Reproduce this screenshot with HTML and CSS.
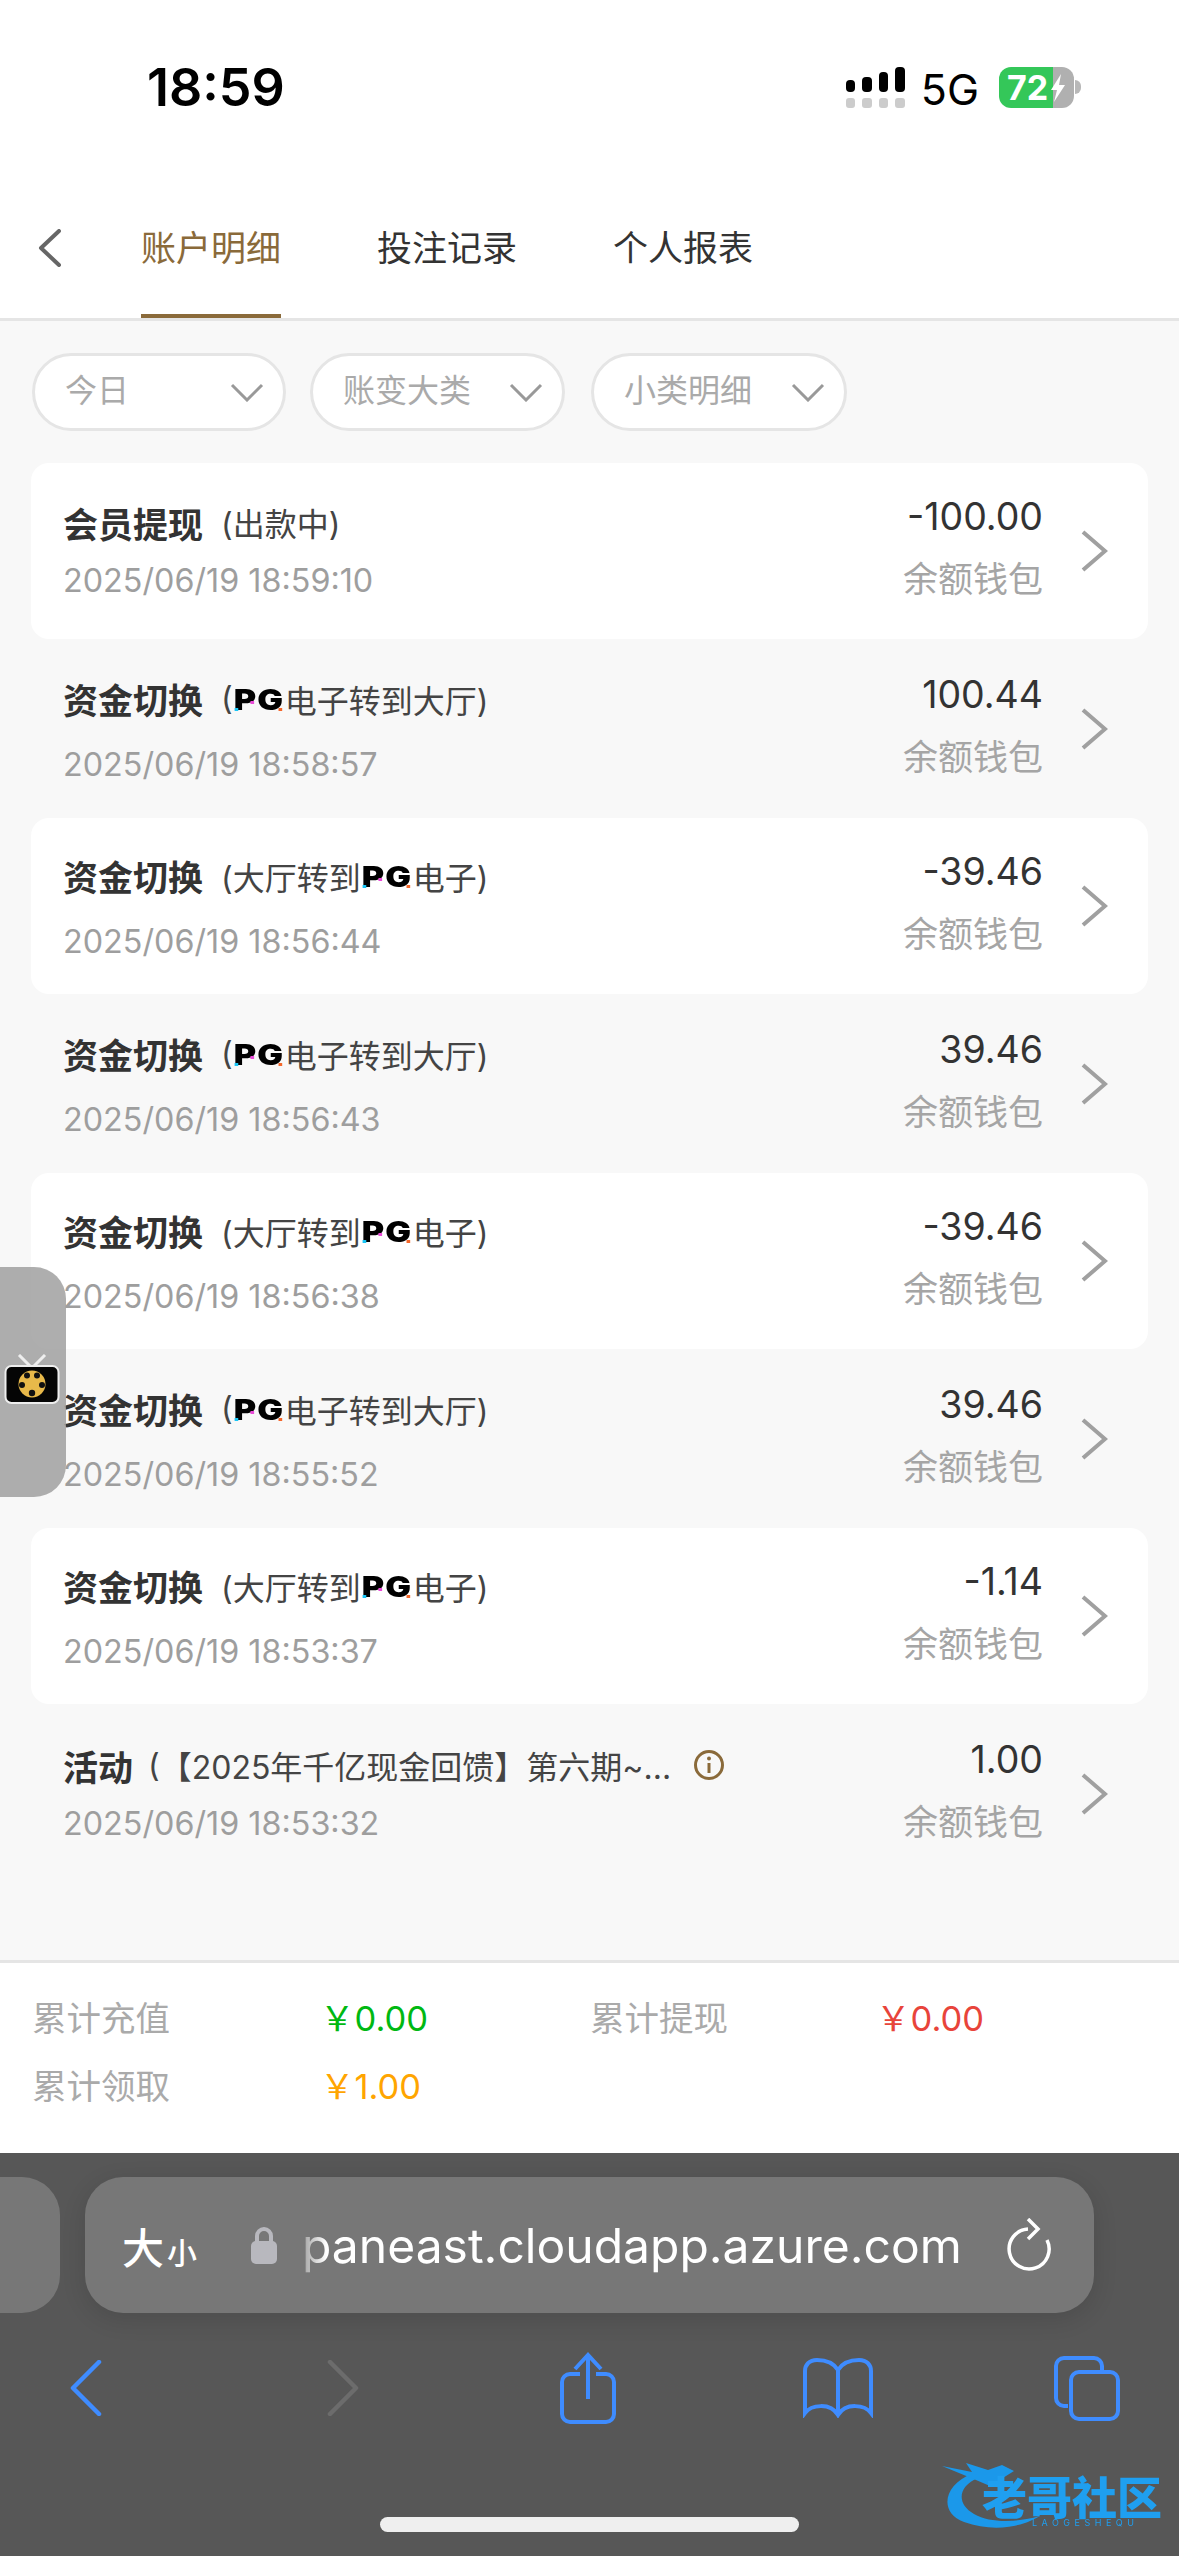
FILE: index.html
```html
<!DOCTYPE html>
<html lang="zh-CN">
<head>
  <meta charset="UTF-8">
  <meta name="viewport" content="width=device-width, initial-scale=1.0">
  <title>账户明细</title>
  <link rel="stylesheet" href="styles.css">
</head>
<body>
  <div class="page">

    <div class="status-bar">
      <span class="time">18:59</span>
      <div class="status-right">
        <div class="signal">
          <div class="bars"><i class="b1"></i><i class="b2"></i><i class="b3"></i><i class="b4"></i></div>
          <div class="bars-off"><i></i><i></i><i></i><i></i></div>
        </div>
        <span class="net">5G</span>
        <div class="battery">
          <span class="battery-num">72</span>
          <svg class="bolt" viewBox="0 0 16 28"><path d="M11 0 L1 16 H7 L4 28 L15 11 H9 Z" fill="#fff"/></svg>
        </div>
        <div class="battery-nub"></div>
      </div>
    </div>

    <div class="tabs">
      <div class="back">
        <svg width="23" height="38" viewBox="0 0 23 38"><path d="M21 2 L3 19 L21 36" fill="none" stroke="#666" stroke-width="4" stroke-linecap="round" stroke-linejoin="round"/></svg>
      </div>
      <div class="tab active">账户明细</div>
      <div class="tab">投注记录</div>
      <div class="tab">个人报表</div>
    </div>

    <div class="filters">
      <div class="pill"><span>今日</span><svg width="34" height="19" viewBox="0 0 34 19"><path d="M2 2 L17 17 L32 2" fill="none" stroke="#999" stroke-width="3"/></svg></div>
      <div class="pill pill-wide"><span>账变大类</span><svg width="34" height="19" viewBox="0 0 34 19"><path d="M2 2 L17 17 L32 2" fill="none" stroke="#999" stroke-width="3"/></svg></div>
      <div class="pill pill-wide pill-last"><span>小类明细</span><svg width="34" height="19" viewBox="0 0 34 19"><path d="M2 2 L17 17 L32 2" fill="none" stroke="#999" stroke-width="3"/></svg></div>
    </div>

    <div class="list">
      <div class="row card">
        <div class="left">
          <div class="title"><b>会员提现</b><span class="sub">(出款中)</span></div>
          <div class="date">2025/06/19 18:59:10</div>
        </div>
        <div class="right"><div class="amount">-100.00</div><div class="wallet">余额钱包</div></div>
        <svg class="arrow" width="27" height="42" viewBox="0 0 27 42"><path d="M2 2 L24 21 L2 40" fill="none" stroke="#a0a0a0" stroke-width="4"/></svg>
      </div>
      <div class="row">
        <div class="left left-pg">
          <div class="title"><b>资金切换</b><span class="sub">(<span class="pg">PG</span>电子转到大厅)</span></div>
          <div class="date">2025/06/19 18:58:57</div>
        </div>
        <div class="right"><div class="amount">100.44</div><div class="wallet">余额钱包</div></div>
        <svg class="arrow" width="27" height="42" viewBox="0 0 27 42"><path d="M2 2 L24 21 L2 40" fill="none" stroke="#a0a0a0" stroke-width="4"/></svg>
      </div>
      <div class="row card">
        <div class="left left-pg">
          <div class="title"><b>资金切换</b><span class="sub">(大厅转到<span class="pg">PG</span>电子)</span></div>
          <div class="date">2025/06/19 18:56:44</div>
        </div>
        <div class="right"><div class="amount">-39.46</div><div class="wallet">余额钱包</div></div>
        <svg class="arrow" width="27" height="42" viewBox="0 0 27 42"><path d="M2 2 L24 21 L2 40" fill="none" stroke="#a0a0a0" stroke-width="4"/></svg>
      </div>
      <div class="row">
        <div class="left left-pg">
          <div class="title"><b>资金切换</b><span class="sub">(<span class="pg">PG</span>电子转到大厅)</span></div>
          <div class="date">2025/06/19 18:56:43</div>
        </div>
        <div class="right"><div class="amount">39.46</div><div class="wallet">余额钱包</div></div>
        <svg class="arrow" width="27" height="42" viewBox="0 0 27 42"><path d="M2 2 L24 21 L2 40" fill="none" stroke="#a0a0a0" stroke-width="4"/></svg>
      </div>
      <div class="row card">
        <div class="left left-pg">
          <div class="title"><b>资金切换</b><span class="sub">(大厅转到<span class="pg">PG</span>电子)</span></div>
          <div class="date">2025/06/19 18:56:38</div>
        </div>
        <div class="right"><div class="amount">-39.46</div><div class="wallet">余额钱包</div></div>
        <svg class="arrow" width="27" height="42" viewBox="0 0 27 42"><path d="M2 2 L24 21 L2 40" fill="none" stroke="#a0a0a0" stroke-width="4"/></svg>
      </div>
      <div class="row">
        <div class="left left-pg">
          <div class="title"><b>资金切换</b><span class="sub">(<span class="pg">PG</span>电子转到大厅)</span></div>
          <div class="date">2025/06/19 18:55:52</div>
        </div>
        <div class="right"><div class="amount">39.46</div><div class="wallet">余额钱包</div></div>
        <svg class="arrow" width="27" height="42" viewBox="0 0 27 42"><path d="M2 2 L24 21 L2 40" fill="none" stroke="#a0a0a0" stroke-width="4"/></svg>
      </div>
      <div class="row card">
        <div class="left left-pg">
          <div class="title"><b>资金切换</b><span class="sub">(大厅转到<span class="pg">PG</span>电子)</span></div>
          <div class="date">2025/06/19 18:53:37</div>
        </div>
        <div class="right"><div class="amount">-1.14</div><div class="wallet">余额钱包</div></div>
        <svg class="arrow" width="27" height="42" viewBox="0 0 27 42"><path d="M2 2 L24 21 L2 40" fill="none" stroke="#a0a0a0" stroke-width="4"/></svg>
      </div>
      <div class="row">
        <div class="left">
          <div class="title"><b>活动</b><span class="sub sub-long">(<span>【2025年千亿现金回馈】第六期~...</span></span>
            <svg class="info" width="32" height="32" viewBox="0 0 32 32"><circle cx="16" cy="16" r="13.5" fill="none" stroke="#8a6a3a" stroke-width="3"/><circle cx="16" cy="9.5" r="2" fill="#8a6a3a"/><path d="M16 14 V24" stroke="#8a6a3a" stroke-width="3"/></svg>
          </div>
          <div class="date">2025/06/19 18:53:32</div>
        </div>
        <div class="right"><div class="amount">1.00</div><div class="wallet">余额钱包</div></div>
        <svg class="arrow" width="27" height="42" viewBox="0 0 27 42"><path d="M2 2 L24 21 L2 40" fill="none" stroke="#a0a0a0" stroke-width="4"/></svg>
      </div>
    </div>

    <div class="summary">
      <span class="sum-label">累计充值</span><span class="sum-val green">￥0.00</span>
      <span class="sum-label">累计提现</span><span class="sum-val red">￥0.00</span>
      <span class="sum-label">累计领取</span><span class="sum-val orange">￥1.00</span>
    </div>

    <div class="browser">
      <div class="url-row">
        <div class="prev-tab"></div>
        <div class="url-bar">
          <span class="aa">大<small>小</small></span>
          <svg class="lock" width="28" height="38" viewBox="0 0 28 38"><path d="M7 17 V10 a7 7 0 0 1 14 0 V17" fill="none" stroke="#b8b8be" stroke-width="4"/><rect x="1" y="15" width="26" height="23" rx="5" fill="#b8b8be"/></svg>
          <span class="url">paneast.cloudapp.azure.com</span>
          <svg class="reload" width="44" height="54" viewBox="0 0 44 54"><path d="M21 11 A20 20 0 1 0 40 22 M21 1 L31 11 L21 21" fill="none" stroke="#fff" stroke-width="3.5"/></svg>
        </div>
      </div>
      <div class="toolbar">
        <svg width="32" height="56" viewBox="0 0 32 56"><path d="M29 2 L3 28 L29 54" fill="none" stroke="#3f8cff" stroke-width="4.5" stroke-linecap="round" stroke-linejoin="round"/></svg>
        <svg width="32" height="56" viewBox="0 0 32 56"><path d="M3 2 L29 28 L3 54" fill="none" stroke="#6c6c6c" stroke-width="4.5" stroke-linecap="round" stroke-linejoin="round"/></svg>
        <svg width="56" height="72" viewBox="0 0 56 72"><path d="M20 22 H10 a8 8 0 0 0 -8 8 V62 a8 8 0 0 0 8 8 H46 a8 8 0 0 0 8 -8 V30 a8 8 0 0 0 -8 -8 H36 M28 47 V3 M15 17 L28 3 L41 17" fill="none" stroke="#3f8cff" stroke-width="4"/></svg>
        <svg width="70" height="60" viewBox="0 0 70 60"><path d="M35 12 C30 4 22 2 14 2 C6 2 2 7 2 13 V55 C8 47 27 44 35 57 C43 44 62 47 68 55 V13 C68 7 64 2 56 2 C48 2 40 4 35 12 V57" fill="none" stroke="#3f8cff" stroke-width="4"/></svg>
        <svg width="68" height="67" viewBox="0 0 68 67"><path d="M15 51 H11 a8 8 0 0 1 -8 -8 V11 a8 8 0 0 1 8 -8 H41 a8 8 0 0 1 8 8 V16" fill="none" stroke="#3f8cff" stroke-width="4"/><rect x="18" y="17" width="47" height="47" rx="8" fill="none" stroke="#3f8cff" stroke-width="4"/></svg>
      </div>
      <div class="home-bar"></div>
    </div>

    <!-- floating widget over the list -->
    <div class="float-tv">
      <svg width="56" height="50" viewBox="0 0 56 50"><path d="M15 1 L26 12 M41 1 L30 12" stroke="#eee" stroke-width="3"/><rect x="1.5" y="12" width="53" height="37" rx="6" fill="#050505" stroke="#eee" stroke-width="2"/><circle cx="28" cy="30" r="13.5" fill="#e8b94a"/><circle cx="23" cy="21.5" r="3" fill="#111"/><circle cx="33" cy="21.5" r="3" fill="#111"/><circle cx="18" cy="31" r="3" fill="#111"/><circle cx="38" cy="31" r="3" fill="#111"/><circle cx="28" cy="39" r="3.2" fill="#111"/></svg>
    </div>

    <!-- watermark -->
    <div class="watermark">
      <svg class="wm-swoosh" width="150" height="70" viewBox="0 0 150 70"><path d="M30 12 C2 22 -4 50 22 60 C50 70 78 66 98 54 C76 60 50 62 32 52 C14 42 16 24 36 16 Z" fill="#1b98ea"/><path d="M0 4 L30 10 L24 1 L46 8 L60 3 L72 9 L48 24 L34 18 Z" fill="#1b98ea"/></svg>
      <span class="wm-text">老哥社区</span>
      <span class="wm-sub">LAOGESHEQU</span>
    </div>

  </div>
</body>
</html>
```

FILE: styles.css
```css
* {
  box-sizing: border-box;
}
body {
  margin: 0;
  background: #f8f8f8;
  font-family: Inter, "Noto Sans CJK SC", sans-serif;
}
.page {
  position: relative;
  width: 1179px;
  height: 2556px;
  overflow: hidden;
  display: flex;
  flex-direction: column;
  background: #f8f8f8;
}

/* status bar */
.status-bar {
  height: 150px;
  background: #fff;
  padding: 62px 98px 0 147px;
  display: flex;
  justify-content: space-between;
  align-items: flex-start;
}
.time {
  font-size: 52px;
  font-weight: 600;
  line-height: 52px;
  color: #000;
}
.status-right {
  display: flex;
  align-items: flex-start;
  padding-top: 5px;
}
.signal {
  width: 59px;
  display: flex;
  flex-direction: column;
  gap: 6px;
}
.bars, .bars-off {
  display: flex;
  gap: 7px;
  align-items: flex-end;
}
.bars i {
  display: block;
  width: 9.5px;
  background: #000;
  border-radius: 4px;
}
.b1 { height: 12px; }
.b2 { height: 15px; }
.b3 { height: 20px; }
.b4 { height: 25px; }
.bars-off i {
  display: block;
  width: 9.5px;
  height: 10px;
  background: #ccc;
  border-radius: 3px;
}
.net {
  font-size: 43px;
  line-height: 42px;
  color: #000;
  margin-left: 16px;
  margin-top: 1px;
}
.battery {
  position: relative;
  width: 75px;
  height: 41px;
  margin-left: 20px;
  border-radius: 12px;
  background: linear-gradient(to right, #34c759 72%, #b0b0b0 72%);
  padding-left: 8px;
}
.battery-num {
  font-size: 34px;
  line-height: 41px;
  font-weight: 700;
  color: #fff;
  display: block;
}
.bolt {
  position: absolute;
  left: 51px;
  top: 7px;
  width: 16px;
  height: 28px;
}
.battery-nub {
  width: 6px;
  height: 14px;
  margin-top: 13px;
  margin-left: 1px;
  background: #b8b8b8;
  border-radius: 0 7px 7px 0;
}

/* tabs */
.tabs {
  height: 171px;
  background: #fff;
  border-bottom: 3px solid #e5e5e5;
  display: flex;
  gap: 96px;
}
.back {
  width: 44px;
  margin-left: 38px;
  margin-right: -37px;
  padding-top: 79px;
}
.tab {
  height: 168px;
  padding-top: 73px;
  font-size: 35px;
  line-height: 50px;
  color: #333;
  border-bottom: 4px solid transparent;
}
.tab.active {
  color: #8a6a3a;
  border-bottom-color: #8a6a3a;
}

/* filters */
.filters {
  height: 142px;
  padding: 32px 0 0 32px;
  display: flex;
  align-items: flex-start;
  gap: 24px;
}
.pill {
  width: 254px;
  height: 78px;
  background: #fff;
  border: 3px solid #e5e5e5;
  border-radius: 39px;
  padding: 0 19px 0 30px;
  display: flex;
  justify-content: space-between;
  align-items: center;
  font-size: 32px;
  line-height: 44px;
  color: #aaa;
}
.pill span {
  margin-bottom: 2px;
}
.pill-wide {
  width: 255px;
}
.pill-last {
  width: 256px;
  margin-left: 2px;
}

/* list */
.list {
  height: 1497px;
  padding: 0 31px;
}
.row {
  height: 177.5px;
  padding: 0 40px 0 32px;
  display: flex;
  align-items: center;
  border-radius: 18px;
}
.row.card {
  background: #fff;
  height: 176px;
  margin-bottom: 1.5px;
}
.left {
  flex: 1;
  padding-bottom: 4.5px;
}
.left-pg {
  padding-bottom: 0;
}
.title {
  display: flex;
  align-items: center;
  height: 50px;
  color: #333;
}
.title b {
  font-size: 35px;
  font-weight: 700;
}
.sub {
  font-size: 32px;
  margin-left: 18px;
  color: #444;
  display: flex;
  align-items: center;
  white-space: nowrap;
}
.sub-long {
  margin-left: 15px;
}
.pg {
  position: relative;
  top: 1.5px;
  display: inline-block;
  width: 50px;
  margin: 0 1px;
  font-size: 28px;
  line-height: 30px;
  font-weight: 900;
  letter-spacing: 1px;
  color: #000;
  text-align: center;
  transform: scaleX(1.22);
}
.pg::after {
  content: "";
  position: absolute;
  left: 5px;
  bottom: 4px;
  width: 3px;
  height: 3px;
  background: #19c5f5;
  box-shadow: 13px -7px 0 #e94ad8, 36px 0 0 #f4672a;
}
.info {
  margin-left: 22px;
}
.date {
  margin-top: 13.5px;
  font-size: 32.3px;
  line-height: 40px;
  color: #9e9e9e;
}
.left-pg .date {
  margin-top: 21px;
}
.right {
  text-align: right;
  margin-right: 38px;
  padding-bottom: 7px;
}
.amount {
  font-size: 37.5px;
  line-height: 46px;
  color: #333;
  margin-bottom: 16px;
}
.wallet {
  font-size: 35px;
  line-height: 46px;
  color: #a5a5a5;
}

/* summary */
.summary {
  height: 193px;
  background: #fff;
  border-top: 3px solid #e5e5e5;
  padding: 19px 0 0 32px;
  display: grid;
  grid-template-columns: 288px 270px 286px auto;
  grid-auto-rows: 68px;
  align-items: center;
  font-size: 34.5px;
}
.sum-label {
  color: #aaa;
}
.green { color: #00b812; }
.red { color: #e8443a; }
.orange { color: #ffa500; }

/* safari chrome */
.browser {
  flex: 1;
  background: #575757;
  padding-top: 24px;
  position: relative;
}
.url-row {
  display: flex;
  gap: 25px;
}
.prev-tab {
  width: 60px;
  height: 136px;
  background: #777;
  border-radius: 0 38px 38px 0;
}
.url-bar {
  width: 1009px;
  height: 136px;
  background: #777;
  border-radius: 38px;
  box-shadow: 0 6px 24px rgba(0, 0, 0, .12);
  padding: 0 43px 0 37px;
  display: flex;
  align-items: center;
  color: #fff;
}
.aa {
  font-size: 42px;
  font-weight: 500;
  width: 128px;
}
.aa small {
  font-size: 30px;
  margin-left: 3px;
}
.lock {
  flex: none;
}
.url {
  font-size: 48px;
  margin-left: 24px;
  width: 672px;
  white-space: nowrap;
  -webkit-mask-image: linear-gradient(to right, rgba(0, 0, 0, .3), #000 24px);
  mask-image: linear-gradient(to right, rgba(0, 0, 0, .3), #000 24px);
}
.reload {
  margin-left: auto;
  flex: none;
}
.toolbar {
  position: relative;
  margin-top: 37px;
  height: 76px;
  padding: 0 57px 0 70px;
  display: grid;
  grid-template-columns: 257px 233px 243px 250px auto;
  align-items: center;
}
.home-bar {
  position: absolute;
  left: 380px;
  top: 364px;
  width: 419px;
  height: 15px;
  background: #efefef;
  border-radius: 8px;
}

/* floating stuff */
.float-tv {
  position: absolute;
  left: 0;
  top: 1267px;
  width: 66px;
  height: 230px;
  background: rgba(160, 160, 160, .85);
  border-radius: 0 32px 32px 0;
  padding: 87px 0 0 4px;
}
.watermark {
  position: absolute;
  left: 942px;
  top: 2462px;
  width: 222px;
  height: 68px;
  color: #1f9ff0;
  filter: blur(.7px);
}
.wm-swoosh {
  position: absolute;
  left: 0;
  top: 0;
}
.wm-text {
  position: absolute;
  left: 40px;
  top: 19px;
  font-size: 45px;
  line-height: 36px;
  font-weight: 900;
  white-space: nowrap;
}
.wm-sub {
  position: absolute;
  left: 90px;
  top: 56px;
  font-size: 9px;
  line-height: 10px;
  letter-spacing: 4.5px;
  white-space: nowrap;
}
```
